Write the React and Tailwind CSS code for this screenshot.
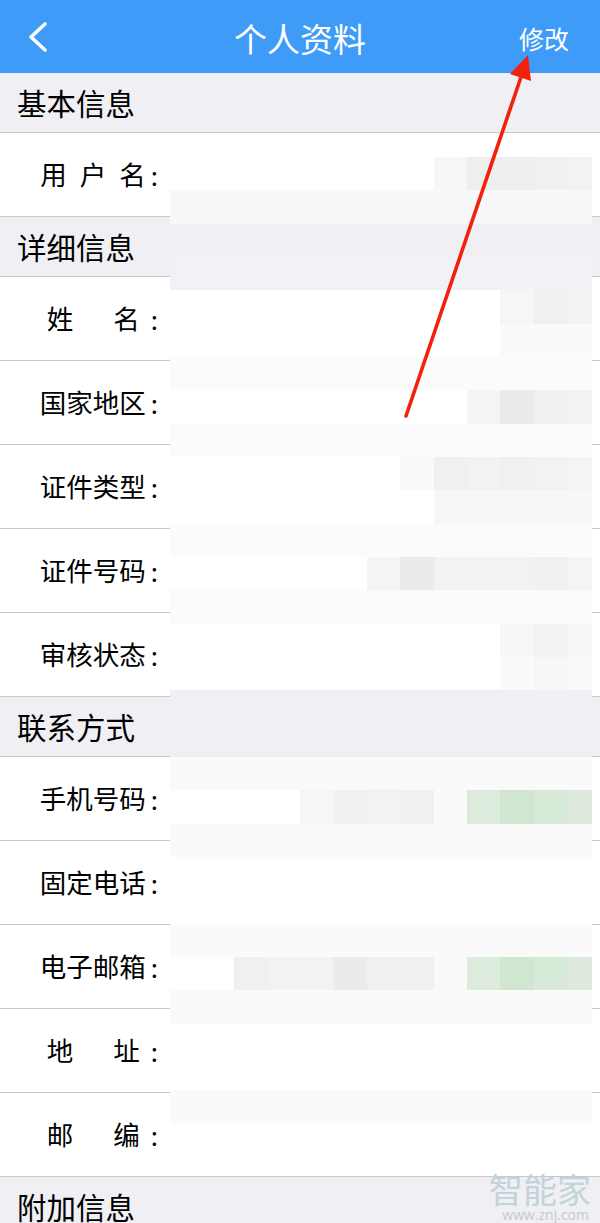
import React from "react";

const FONT = { fontFamily: '"Noto Sans CJK SC", "Noto Sans", sans-serif' };

const PALETTE = {
  ".": "",
  a: "bg-[#fafafa]",
  b: "bg-[#fbfbfb]",
  c: "bg-[#f8f8fa]",
  S: "bg-[#efeff4]",
  T: "bg-[#f2f2f6]",
  "1": "bg-[#f7f7f7]",
  "2": "bg-[#f4f4f4]",
  "3": "bg-[#f2f2f2]",
  "4": "bg-[#f0f0f0]",
  "5": "bg-[#eeeeee]",
  "6": "bg-[#ebebeb]",
  "7": "bg-[#f6f6f6]",
  "8": "bg-[#f9f9f9]",
  g: "bg-[#dcebdc]",
  h: "bg-[#d1e6d1]",
  i: "bg-[#d7e9d7]",
  j: "bg-[#dde9dd]",
};

const MOSAIC = [
  "........75543",
  "ccccccccccccc",
  "SSSSSSSSSSSSS",
  "TTTTTTTTTTTTT",
  "..........743",
  "..........aaa",
  "bbbbbbbbbbbbb",
  ".........2643",
  "bbbbbbbbbbbbb",
  ".......a43432",
  "........11111",
  "bbbbbbbbbbbbb",
  "......2633342",
  "bbbbbbbbbbbbb",
  "..........137",
  "..........a1a",
  "SSSSSSSSSSSSS",
  "SSSSSSSSSSSSS",
  "aaaaaaaaaaaaa",
  "....7434aghij",
  "aaaaaaaaaaaaa",
  ".............",
  ".............",
  "aaaaaaaaaaaaa",
  "..4336448ghij",
  "aaaaaaaaaaaaa",
  ".............",
  ".............",
  "aaaaaaaaaaaaa",
];

function Section({ title }) {
  return (
    <div className="h-[60px] bg-[#efeff4] border-b border-[#c8c7cc] flex items-center pl-[17px]">
      <span className="text-[29.5px] leading-none text-black">{title}</span>
    </div>
  );
}

function Row({ chars }) {
  const gap =
    chars.length === 4 ? "gap-0" : chars.length === 3 ? "gap-[13px]" : "gap-[40px]";
  const colonGap = chars.length === 2 ? "ml-[11px]" : "ml-[5px]";
  return (
    <div className="h-[84px] bg-white border-b border-[#c8c7cc] flex items-center">
      <div className="w-[158px] flex justify-end items-center">
        <div className={`flex ${gap}`}>
          {chars.map((c, k) => (
            <span key={k} className="text-[26.5px] leading-none text-black">
              {c}
            </span>
          ))}
        </div>
        <span className={`${colonGap} text-[26px] leading-none text-black`}>:</span>
      </div>
    </div>
  );
}

export default function App() {
  return (
    <div className="relative w-[600px] h-[1223px] overflow-hidden bg-white" style={FONT}>
      {/* Header */}
      <div className="h-[73px] bg-[#3e9bf7] grid grid-cols-[1fr_auto_1fr] items-center">
        <div className="pl-[27px] flex items-center">
          <svg width="22" height="30" viewBox="0 0 22 30">
            <polyline
              points="18,2 4,15 18,28"
              fill="none"
              stroke="white"
              strokeWidth="3.6"
              strokeLinecap="round"
              strokeLinejoin="round"
            />
          </svg>
        </div>
        <span className="text-[33px] leading-none text-white pt-[4px]">个人资料</span>
        <div className="flex justify-end pr-[31px]">
          <span className="text-[25px] leading-none text-white pt-[4px]">修改</span>
        </div>
      </div>

      <Section title="基本信息" />
      <Row chars={["用", "户", "名"]} />
      <Section title="详细信息" />
      <Row chars={["姓", "名"]} />
      <Row chars={["国", "家", "地", "区"]} />
      <Row chars={["证", "件", "类", "型"]} />
      <Row chars={["证", "件", "号", "码"]} />
      <Row chars={["审", "核", "状", "态"]} />
      <Section title="联系方式" />
      <Row chars={["手", "机", "号", "码"]} />
      <Row chars={["固", "定", "电", "话"]} />
      <Row chars={["电", "子", "邮", "箱"]} />
      <Row chars={["地", "址"]} />
      <Row chars={["邮", "编"]} />
      <Section title="附加信息" />

      {/* Mosaic overlay */}
      <div className="absolute left-[170px] top-[157px] w-[422px] grid grid-cols-[30px_34px_33px_33px_34px_33px_33px_34px_33px_33px_34px_33px_25px] grid-rows-[repeat(29,33.333px)]">
        {MOSAIC.flatMap((row, r) =>
          row.split("").map((ch, c) => (
            <div key={`${r}-${c}`} className={PALETTE[ch]} />
          ))
        )}
      </div>

      {/* Red arrow annotation */}
      <svg
        className="absolute inset-0 pointer-events-none"
        width="600"
        height="1223"
        viewBox="0 0 600 1223"
      >
        <line x1="406" y1="416" x2="522" y2="74" stroke="#f2200c" strokeWidth="3.6" strokeLinecap="round" />
        <polygon points="528,55 510,74 531,81" fill="#f2200c" />
      </svg>

      {/* Watermark */}
      <div className="absolute right-[9px] top-[1172px] flex flex-col items-end">
        <span className="text-[34px] leading-none text-[#c2d4d8]">智能家</span>
        <span className="text-[14px] leading-none text-[#c4cacd] mt-[2px] pr-[2px]" style={{ fontFamily: '"Open Sans", sans-serif' }}>
          www.znj.com
        </span>
      </div>
    </div>
  );
}
